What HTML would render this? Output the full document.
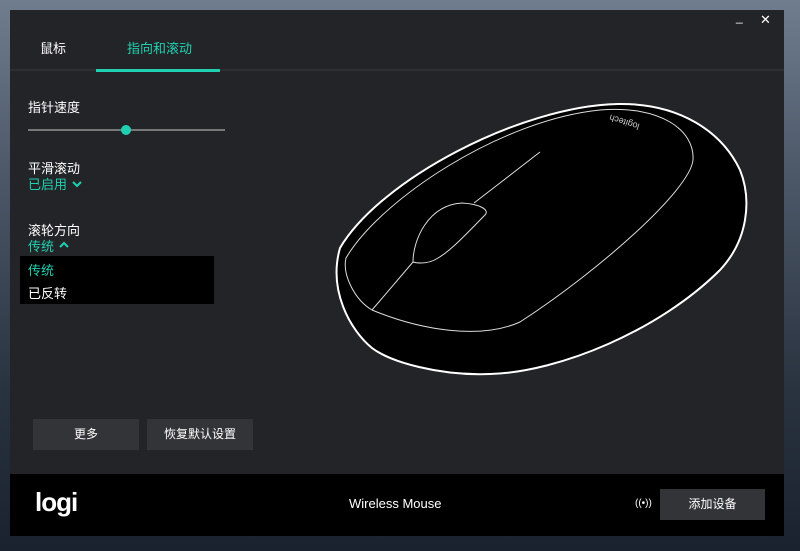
<!DOCTYPE html>
<html><head><meta charset="utf-8"><style>
body{margin:0;width:800px;height:551px;overflow:hidden;background:linear-gradient(180deg,#6f7d8f 0%,#4e5a6a 30%,#2a3340 70%,#1a2230 100%);font-family:"Liberation Sans","Noto Sans CJK SC",sans-serif;position:relative}
.win{position:absolute;left:10px;top:10px;width:774px;height:526px;background:#232427}
.t{position:absolute;color:#fff;font-size:13px}
.g{color:#1fd1b0}
.foot{position:absolute;left:0;top:464px;width:774px;height:62px;background:#000}
.btn{position:absolute;background:#333437;color:#fff;font-size:12px;text-align:center}
</style></head><body>
<div class="win">
 <div class="t" style="left:726px;top:0;font-size:12px">_</div>
 <div class="t" style="left:750px;top:2px;font-size:13px">✕</div>
 <div class="t" style="left:30px;top:28px">鼠标</div>
 <div class="t g" style="left:117px;top:28px">指向和滚动</div>
 <div style="position:absolute;left:0;top:59px;width:774px;height:2px;background:#2e2f33"></div>
 <div style="position:absolute;left:86px;top:59px;width:124px;height:3px;background:#1fd1b0"></div>
 <div class="t" style="left:18px;top:87px">指针速度</div>
 <div style="position:absolute;left:18px;top:119px;width:197px;height:2px;background:#777"></div>
 <div style="position:absolute;left:111px;top:115px;width:10px;height:10px;border-radius:50%;background:#1fd1b0"></div>
 <div class="t" style="left:18px;top:148px">平滑滚动</div>
 <div class="t g" style="left:18px;top:164px">已启用</div>
 <svg style="position:absolute;left:62px;top:170px" width="10" height="8"><path d="M1,2 L5,6 L9,2" fill="none" stroke="#1fd1b0" stroke-width="2"/></svg>
 <div class="t" style="left:18px;top:210px">滚轮方向</div>
 <div class="t g" style="left:18px;top:226px">传统</div>
 <svg style="position:absolute;left:49px;top:231px" width="10" height="8"><path d="M1,6 L5,2 L9,6" fill="none" stroke="#1fd1b0" stroke-width="2"/></svg>
 <div style="position:absolute;left:10px;top:246px;width:194px;height:48px;background:#000"></div>
 <div class="t g" style="left:18px;top:250px">传统</div>
 <div class="t" style="left:18px;top:273px">已反转</div>
 <div class="btn" style="left:23px;top:409px;width:106px;height:31px;line-height:31px">更多</div>
 <div class="btn" style="left:137px;top:409px;width:106px;height:31px;line-height:31px">恢复默认设置</div>
 <div class="foot">
  <div style="position:absolute;left:25px;top:13px;color:#fff;font-size:26px;letter-spacing:-1px;font-weight:bold">logi</div>
  <div style="position:absolute;left:339px;top:22px;color:#fff;font-size:13px">Wireless Mouse</div>
  <div style="position:absolute;left:625px;top:24px;color:#fff;font-size:10px">((•))</div>
  <div class="btn" style="left:650px;top:15px;width:105px;height:31px;line-height:31px">添加设备</div>
 </div>
</div>
<svg style="position:absolute;left:0;top:0" width="800" height="551">
 <path d="M340,248 C380,180 520,106 618,104 C680,103 722,132 740,170 C752,200 748,240 720,270 C660,330 560,372 490,374 C440,376 390,362 372,348 C350,330 328,290 340,248 Z" fill="#000" stroke="#fff" stroke-width="2"/>
 <path d="M372,310 C355,300 342,275 346,258 C380,200 500,120 600,110 C660,105 695,130 693,160 C690,190 600,270 520,322 C480,340 420,330 372,310" fill="none" stroke="#ddd" stroke-width="1"/>
 <path d="M372,310 L413,262 M413,262 C413,240 428,205 462,203 C480,204 490,210 485,215 C470,230 452,250 438,258 C426,266 413,262 413,262 M474,203 L540,152" fill="none" stroke="#ddd" stroke-width="1"/>
 <text x="0" y="0" fill="#ccc" font-size="9" font-family="Liberation Sans" transform="translate(640,124) rotate(198)">logitech</text>
</svg>
</body></html>
